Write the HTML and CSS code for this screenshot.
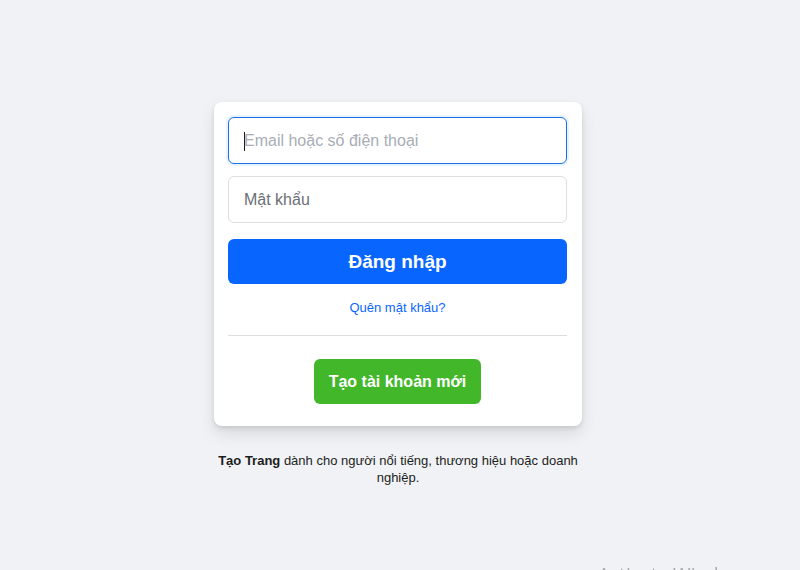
FILE: index.html
```html
<!DOCTYPE html>
<html lang="vi">
<head>
<meta charset="utf-8">
<title>Đăng nhập</title>
<link rel="stylesheet" href="styles.css">
</head>
<body>
<main class="page">
  <div class="card">
    <form class="login-form">
      <div class="field focused"><span class="caret"></span><span class="ph light">Email hoặc số điện thoại</span></div>
      <div class="field"><span class="ph">Mật khẩu</span></div>
      <button type="button" class="btn-login">Đăng nhập</button>
      <div class="forgot"><a href="#">Quên mật khẩu?</a></div>
      <hr class="divider">
      <div class="create-wrap"><button type="button" class="btn-create">Tạo tài khoản mới</button></div>
    </form>
  </div>
  <p class="footer-note"><b>Tạo Trang</b> dành cho người nổi tiếng, thương hiệu hoặc doanh nghiệp.</p>
</main>
<div class="watermark">Activate Windows</div>
</body>
</html>
```
FILE: styles.css
```css
html, body {
  margin: 0;
  padding: 0;
  background: #f0f2f5;
  font-family: "Liberation Sans", Arial, sans-serif;
  height: 100%;
  overflow: hidden;
}
.page {
  display: flex;
  flex-direction: column;
  align-items: center;
  padding-top: 102px;
  padding-right: 4px;
}
.card {
  width: 368px;
  box-sizing: border-box;
  background: #fff;
  border-radius: 8px;
  box-shadow: 0 2px 4px rgba(0,0,0,0.1), 0 8px 16px rgba(0,0,0,0.1);
  padding: 15px 15px 22px 14px;
}
.login-form {
  display: flex;
  flex-direction: column;
}
.field {
  height: 47px;
  box-sizing: border-box;
  border: 1px solid #dddfe2;
  border-radius: 6px;
  display: flex;
  align-items: center;
  padding-left: 15px;
  font-size: 16px;
  position: relative;
}
.field + .field { margin-top: 12px; }
.field.focused {
  border-color: #1a6ee6;
  box-shadow: 0 0 0 2px #e7f3ff;
}
.ph { color: #6b6f75; }
.ph.light { color: #a8adb5; }
.caret {
  position: absolute;
  left: 15px;
  top: 14px;
  width: 1px;
  height: 19px;
  background: #1c1e21;
}
.btn-login {
  margin-top: 16px;
  height: 45px;
  border: none;
  border-radius: 6px;
  background: #0866ff;
  color: #fff;
  font-family: inherit;
  font-size: 19px;
  font-weight: bold;
}
.forgot {
  text-align: center;
  margin-top: 13px;
  line-height: 19px;
}
.forgot a {
  color: #0866ff;
  font-size: 13px;
  text-decoration: none;
}
.divider {
  border: none;
  border-top: 1px solid #dadde1;
  margin: 18px 0 0;
}
.create-wrap {
  display: flex;
  justify-content: center;
  margin-top: 23px;
}
.btn-create {
  height: 45px;
  padding: 0 15px;
  border: none;
  border-radius: 6px;
  background: #42b72a;
  color: #fff;
  font-family: inherit;
  font-size: 16px;
  font-weight: bold;
}
.footer-note {
  width: 368px;
  margin: 26px 0 0;
  text-align: center;
  font-size: 13px;
  line-height: 17px;
  color: #1c1e21;
}
.watermark {
  position: fixed;
  left: 598px;
  top: 561px;
  font-family: "Segoe UI", "Open Sans", sans-serif;
  font-size: 19px;
  color: rgba(120,120,120,0.6);
}
```
